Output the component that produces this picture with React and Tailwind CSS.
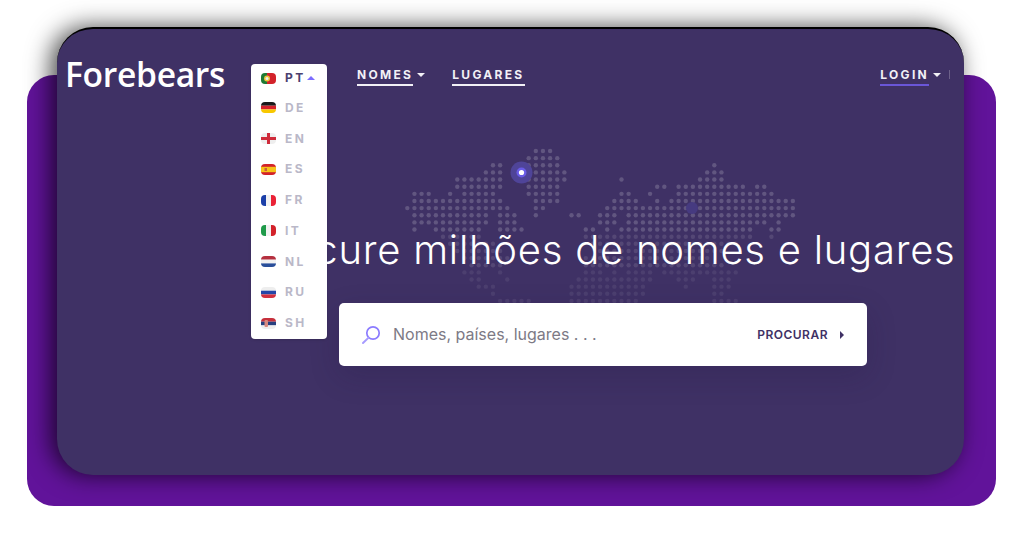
import { useState } from 'react';

// dot map rows: [row, [firstCol, lastCol], ...]
const mapRows = [
  [0, [18, 20]],
  [1, [17, 21]],
  [2, [12, 13], [17, 21], [43, 43]],
  [3, [11, 13], [17, 22], [42, 44]],
  [4, [7, 13], [17, 22], [30, 30], [41, 44]],
  [5, [7, 13], [17, 21], [35, 36], [38, 47], [49, 50]],
  [6, [1, 3], [6, 6], [8, 12], [17, 21], [30, 31], [34, 34], [38, 51]],
  [7, [1, 13], [18, 21], [29, 32], [35, 35], [37, 54]],
  [8, [0, 14], [18, 19], [28, 54]],
  [9, [1, 11], [13, 15], [18, 18], [23, 24], [27, 29], [31, 54]],
  [10, [1, 11], [13, 15], [27, 29], [31, 50], [52, 52]],
  [11, [1, 1], [4, 10], [13, 16], [25, 26], [28, 28], [30, 48], [51, 52]],
  [12, [5, 10], [25, 48], [51, 51]],
  [13, [6, 12], [26, 46]],
  [14, [7, 13], [27, 44]],
  [15, [8, 14], [25, 42]],
  [16, [9, 13], [25, 44]],
  [17, [8, 10], [13, 13], [25, 27], [29, 29], [31, 34], [36, 46]],
  [18, [9, 10], [14, 14], [24, 34], [38, 40], [43, 45]],
  [19, [10, 12], [23, 33], [39, 39], [43, 45]],
  [20, [12, 12], [23, 33], [43, 44]],
  [21, [13, 17], [23, 32], [43, 46]],
];

function DotMap() {
  const dots = [];
  mapRows.forEach(([row, ...ranges]) => {
    const fade = row > 16 ? 0.07 : row > 11 ? 0.11 : 0.18;
    ranges.forEach(([from, to]) => {
      for (let c = from; c <= to; c++) {
        dots.push(<circle key={`${row}-${c}`} cx={350.3 + c * 7.14} cy={122 + row * 7.14} r="2.2" fill="#fff" fillOpacity={fade} />);
      }
    });
  });
  return (
    <svg className="absolute left-0 top-0" width="907" height="448" viewBox="0 0 907 448">
      {dots}
      <circle cx="635" cy="179" r="6" fill="#463a80" />
      <circle cx="464.5" cy="143.5" r="11" fill="#4f4498" />
      <circle cx="464.5" cy="143.5" r="5" fill="#6a5ce6" />
      <circle cx="464.5" cy="143.5" r="2.6" fill="#fff" />
    </svg>
  );
}

const flags = {
  PT: <><rect width="6" height="11" fill="#1f7a34" /><rect x="6" width="9" height="11" fill="#d3222a" /><circle cx="6" cy="5.5" r="3" fill="#e8c33c" /><circle cx="6" cy="5.5" r="1.5" fill="#eee" /></>,
  DE: <><rect width="15" height="3.7" fill="#1a1a1a" /><rect y="3.7" width="15" height="3.7" fill="#d6202a" /><rect y="7.4" width="15" height="3.6" fill="#f8c800" /></>,
  EN: <><rect width="15" height="11" fill="#eeeeee" /><rect x="6" width="3" height="11" fill="#cf2b3a" /><rect y="4" width="15" height="3" fill="#cf2b3a" /></>,
  ES: <><rect width="15" height="11" fill="#d3222a" /><rect y="2.8" width="15" height="5.4" fill="#f6c41a" /><rect x="3.5" y="4" width="2.5" height="3" fill="#c9603a" /></>,
  FR: <><rect width="5" height="11" fill="#1c3fa8" /><rect x="5" width="5" height="11" fill="#f2f2f2" /><rect x="10" width="5" height="11" fill="#ea2236" /></>,
  IT: <><rect width="5" height="11" fill="#1f9a4a" /><rect x="5" width="5" height="11" fill="#f2f2f2" /><rect x="10" width="5" height="11" fill="#d3222a" /></>,
  NL: <><rect width="15" height="3.7" fill="#b5303f" /><rect y="3.7" width="15" height="3.7" fill="#f2f2f2" /><rect y="7.4" width="15" height="3.6" fill="#2a4f9a" /></>,
  RU: <><rect width="15" height="3.7" fill="#eeeeee" /><rect y="3.7" width="15" height="3.7" fill="#2546a8" /><rect y="7.4" width="15" height="3.6" fill="#d3303f" /></>,
  SH: <><rect width="15" height="3.7" fill="#c6303c" /><rect y="3.7" width="15" height="3.7" fill="#27407f" /><rect y="7.4" width="15" height="3.6" fill="#eeeeee" /><rect x="3.5" y="2" width="3.5" height="7" rx="1" fill="#d98a80" /></>,
};

const languages = ['DE', 'EN', 'ES', 'FR', 'IT', 'NL', 'RU', 'SH'];

function Flag({ code }) {
  return (
    <svg className="shrink-0 rounded-[4px]" width="15" height="11" viewBox="0 0 15 11">
      {flags[code]}
    </svg>
  );
}

function LanguageMenu() {
  return (
    <div className="relative w-[76px] shrink-0">
      <ul className="absolute left-0 -top-[3px] z-20 h-[275px] w-[76px] rounded-[4px] bg-white pl-[10px] shadow-sm">
        <li className="flex h-[28.6px] items-center gap-[9px] text-[12px] font-bold tracking-[2.4px] text-[#4a4070]">
          <Flag code="PT" />
          <span>PT</span>
          <span className="-ml-[8px] h-0 w-0 border-x-[4px] border-b-[4px] border-x-transparent border-b-[#7c6cff]" />
        </li>
        {languages.map((code) => (
          <li key={code} className="flex h-[30.75px] items-center gap-[9px] text-[12px] font-bold tracking-[2.4px] text-[#bab8c8]">
            <Flag code={code} />
            <span>{code}</span>
          </li>
        ))}
      </ul>
    </div>
  );
}

function Caret() {
  return <span className="block h-0 w-0 border-x-[4px] border-t-[4px] border-x-transparent border-t-[#f2f0f6]" />;
}

export default function App() {
  const [query, setQuery] = useState('');

  return (
    <div className="h-[536px] w-[1024px] overflow-hidden bg-white pl-[27px] pt-[75px] font-['Inter',sans-serif]">
      <div className="h-[431px] w-[969px] rounded-[27px] bg-[#61139a]">
        <div className="relative ml-[30px] h-[448px] w-[907px] -translate-y-[48px] rounded-[36px] border-t-2 border-black bg-[#3f3165] shadow-[-6px_0_24px_rgba(0,0,0,0.72)]">
          <DotMap />

          <nav className="relative flex h-[59px] items-start pl-[8px] pr-[14px] pt-[38px] text-white">
            <a className="-mt-[13px] w-[186px] shrink-0 font-['Open_Sans',sans-serif] text-[33.6px] font-semibold leading-[40px] tracking-[-0.3px]">Forebears</a>
            <LanguageMenu />
            <div className="ml-[30px] border-b-2 border-[#f2f0f6] pb-[2px] text-[12px] font-bold leading-[15px] tracking-[2.3px] text-[#f2f0f6]">
              NOMES
            </div>
            <span className="ml-[4px] mt-[6px]"><Caret /></span>
            <div className="ml-[27px] border-b-2 border-[#f2f0f6] pb-[2px] text-[12px] font-bold leading-[15px] tracking-[2.3px] text-[#f2f0f6]">
              LUGARES
            </div>
            <div className="ml-auto border-b-2 border-[#6a56d8] pb-[2px] text-[12px] font-bold leading-[15px] tracking-[2.3px] text-[#f2f0f6]">
              LOGIN
            </div>
            <span className="ml-[4px] mt-[6px]"><Caret /></span>
            <span className="ml-[8px] mt-[3px] h-[9px] w-[1px] bg-[#6c6089]" />
          </nav>

          <section className="relative ml-[282px] mt-[137px] w-[528px]">
            <h1 className="flex justify-center whitespace-nowrap text-[40px] font-light leading-[50px] tracking-[0.76px] text-white">
              Procure milhões de nomes e lugares
            </h1>
            <div className="mt-[28px] flex h-[63px] items-center rounded-[5px] bg-white pl-[22px] pr-[23px] shadow-[0_10px_30px_rgba(30,20,60,0.2)]">
              <svg width="20" height="20" viewBox="0 0 20 20" fill="none" className="shrink-0">
                <circle cx="12" cy="8" r="6.2" stroke="#8b7bff" strokeWidth="1.7" />
                <path d="M7.6 12.6 2 18" stroke="#a79bff" strokeWidth="2" strokeLinecap="round" />
              </svg>
              <input
                value={query}
                onChange={(e) => setQuery(e.target.value)}
                placeholder="Nomes, países, lugares . . ."
                className="-mt-[1px] ml-[12px] min-w-0 flex-1 bg-transparent text-[16px] text-[#6f6b76] outline-none placeholder:text-[#7d7a85]"
              />
              <button className="flex items-center gap-[12px] text-[12px] font-semibold tracking-[0.5px] text-[#3f3165]">
                PROCURAR
                <span className="h-0 w-0 border-y-[4px] border-l-[4px] border-y-transparent border-l-[#3f3165]" />
              </button>
            </div>
          </section>
        </div>
      </div>
    </div>
  );
}
